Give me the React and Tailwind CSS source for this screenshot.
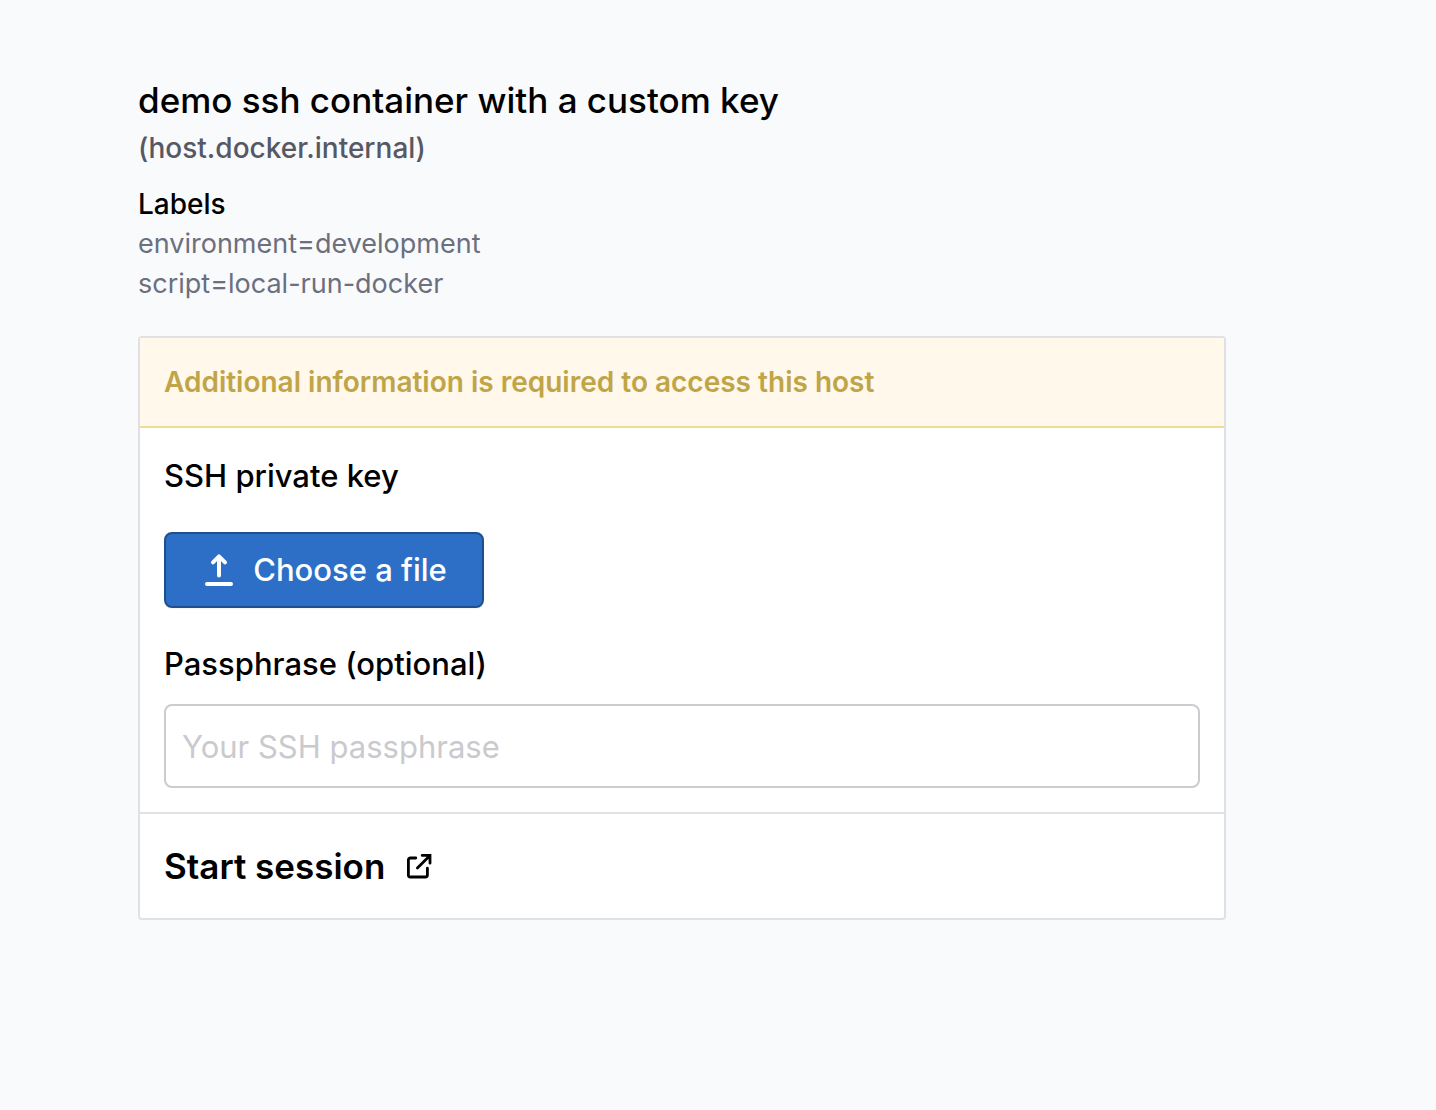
import { useRef } from 'react';

const labels = ['environment=development', 'script=local-run-docker'];

function UploadIcon() {
    return (
        <svg
            className="h-9 w-9"
            viewBox="0 0 36 36"
            fill="none"
            stroke="currentColor"
            strokeWidth="4"
            strokeLinecap="round"
            strokeLinejoin="round"
            aria-hidden="true"
        >
            <path d="M18 23.5V5M12 10.3l6-6 6 6" />
            <path d="M6 32h24" />
        </svg>
    );
}

function ExternalIcon() {
    return (
        <svg
            className="h-7 w-7"
            viewBox="0 0 28 28"
            fill="none"
            stroke="currentColor"
            strokeWidth="2.8"
            strokeLinecap="round"
            aria-hidden="true"
        >
            <path d="M10.8 6H5.4a2 2 0 0 0-2 2v15a2 2 0 0 0 2 2h15a2 2 0 0 0 2-2v-6.8" />
            <path d="M17.2 3.4H25v7.8M25 3.4L12.4 16" />
        </svg>
    );
}

function HostHeader() {
    return (
        <header>
            <h1 className="text-[35px] leading-12 font-medium">demo ssh container with a custom key</h1>
            <p className="text-[28px] leading-12 font-medium text-[#575863]">(host.docker.internal)</p>
            <h2 className="mt-3 text-[28px] leading-10 font-medium">Labels</h2>
            <ul className="text-[27px] leading-10 text-[#6b6f7e]">
                {labels.map((label) => (
                    <li key={label}>{label}</li>
                ))}
            </ul>
        </header>
    );
}

export default function App() {
    const fileRef = useRef(null);

    return (
        <main className="min-h-screen bg-[#f9fafc] pt-19 pr-[210px] pl-[138px] font-['Inter',sans-serif] text-black">
            <HostHeader />
            <form className="mt-8 rounded-sm border-2 border-[#dfe1e4] bg-white" onSubmit={(e) => e.preventDefault()}>
                <p className="border-b-2 border-[#f0db93] bg-[#fff8eb] p-6 text-[28px] leading-10 font-semibold text-[#c0a548]">
                    Additional information is required to access this host
                </p>
                <div className="p-6">
                    <h3 className="text-[31px] leading-12 font-medium">SSH private key</h3>
                    <input ref={fileRef} type="file" className="hidden" aria-label="SSH private key" />
                    <button
                        type="button"
                        onClick={() => fileRef.current?.click()}
                        className="mt-8 flex h-19 w-[320px] items-center justify-center gap-4 rounded-lg border-2 border-[#1f4f8c] bg-[#2d6fc6] text-[31px] font-medium text-white shadow-xs"
                    >
                        <UploadIcon />
                        Choose a file
                    </button>
                    <label htmlFor="passphrase" className="mt-8 block text-[31px] leading-12 font-medium">
                        Passphrase (optional)
                    </label>
                    <input
                        id="passphrase"
                        type="password"
                        placeholder="Your SSH passphrase"
                        className="mt-4 h-21 w-full rounded-lg border-2 border-[#cbcbd0] bg-white px-4 text-[31px] placeholder:text-[#cacace]"
                    />
                </div>
                <div className="border-t-2 border-[#dfe1e4] p-6">
                    <button type="submit" className="flex items-center gap-5 text-[35px] leading-14 font-semibold">
                        Start session
                        <ExternalIcon />
                    </button>
                </div>
            </form>
        </main>
    );
}
